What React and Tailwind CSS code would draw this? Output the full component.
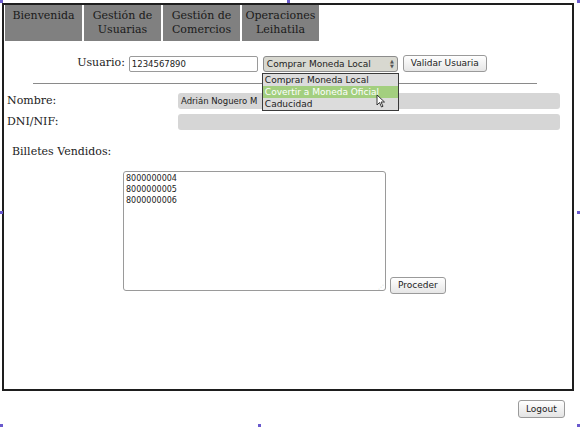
export default function App() {
  const serif = { fontFamily: '"DejaVu Serif", serif' };
  const tabs = [
    ["Bienvenida", ""],
    ["Gestión de", "Usuarias"],
    ["Gestión de", "Comercios"],
    ["Operaciones", "Leihatila"],
  ];

  return (
    <div className="relative w-[580px] h-[427px] bg-white overflow-hidden font-['DejaVu_Sans',sans-serif] text-[#222]">
      {/* Main frame */}
      <div className="absolute left-[2px] top-[3px] w-[572px] h-[388px] border-2 border-[#1e1e1e] bg-white">
        {/* Tabs */}
        <div className="flex gap-[2px] pl-[1px]" style={serif}>
          {tabs.map(([a, b]) => (
            <div
              key={a}
              className="w-[77px] h-[36px] bg-[#808080] text-[#1a1a1a] text-[11px] leading-[14px] flex flex-col items-center pt-[4px]"
            >
              <span>{a}</span>
              {b && <span>{b}</span>}
            </div>
          ))}
        </div>

        {/* Usuario row */}
        <div className="flex items-center justify-center mt-[14px] ml-[-12px] h-[17px]">
          <span className="text-[11px] mr-[4px]" style={serif}>Usuario:</span>
          <div className="w-[129px] h-[16px] border border-[#9a9a9a] rounded-[2px] text-[8.5px] leading-[14px] px-[2px] bg-white">
            1234567890
          </div>
          <div className="relative ml-[5px]">
            <div className="w-[135px] h-[16px] border border-[#8c8c8c] rounded-[3px] bg-[#d8d8d0] text-[9px] leading-[14px] pl-[3px] flex items-center justify-between pr-[3px]">
              <span>Comprar Moneda Local</span>
              <span className="text-[5px] leading-[5px] flex flex-col text-[#555]">
                <span>▲</span>
                <span>▼</span>
              </span>
            </div>
            {/* Open list */}
            <div className="absolute left-[-1px] top-[17px] w-[137px] border border-[#3a3a3a] bg-[#dcdcdc] text-[9px] leading-[12px] z-10">
              <div className="pl-[2px]">Comprar Moneda Local</div>
              <div className="pl-[2px] bg-[#a3cf7f] text-white">Covertir a Moneda Oficial</div>
              <div className="pl-[2px]">Caducidad</div>
              {/* cursor */}
              <svg className="absolute left-[113px] top-[20px]" width="11" height="14" viewBox="0 0 11 14">
                <path d="M1 1 L1 11 L3.5 8.5 L5.5 13 L7 12.3 L5 8 L8.5 8 Z" fill="#fff" stroke="#222" strokeWidth="0.9" />
              </svg>
            </div>
          </div>
          <div className="ml-[5px] h-[17px] px-[7px] border border-[#9a9a9a] rounded-[3px] bg-gradient-to-b from-white to-[#e6e6e6] text-[9px] leading-[15px]">
            Validar Usuaria
          </div>
        </div>

        {/* Separator */}
        <div className="mx-[29px] mt-[11px] h-[1px] bg-[#8a8a8a] w-[504px]" />

        {/* Nombre / DNI */}
        <div className="mt-[9px] flex items-center h-[16px]">
          <span className="w-[174px] pl-[3px] text-[11px]" style={serif}>Nombre:</span>
          <div className="w-[382px] h-[16px] rounded-[3px] bg-[#d6d6d6] text-[8.5px] leading-[16px] px-[3px]">
            Adrián Noguero M
          </div>
        </div>
        <div className="mt-[5px] flex items-center h-[16px]">
          <span className="w-[174px] pl-[3px] text-[11px]" style={serif}>DNI/NIF:</span>
          <div className="w-[382px] h-[16px] rounded-[3px] bg-[#d6d6d6]" />
        </div>

        {/* Billetes */}
        <div className="mt-[14px] pl-[8px] text-[11px]" style={serif}>Billetes Vendidos:</div>

        <div className="mt-[10px] ml-[119px] flex items-end">
          <div className="relative w-[263px] h-[120px] border border-[#9a9a9a] rounded-[3px] text-[8px] leading-[11px] px-[2px] pt-[1px]">
            <div>8000000004</div>
            <div>8000000005</div>
            <div>8000000006</div>
            <span className="absolute right-[1px] bottom-[0px] text-[6px] leading-[6px] text-[#bbb]">⋰</span>
          </div>
          <div className="ml-[4px] mb-[-3px] h-[17px] px-[7px] border border-[#9a9a9a] rounded-[3px] bg-gradient-to-b from-white to-[#e6e6e6] text-[9px] leading-[15px]">
            Proceder
          </div>
        </div>
      </div>

      {/* Logout */}
      <div className="absolute left-[518px] top-[400px] h-[18px] px-[7px] border border-[#9a9a9a] rounded-[3px] bg-gradient-to-b from-white to-[#e4e4e4] text-[9px] leading-[16px]">
        Logout
      </div>

      {/* Selection handles */}
      {[
        "left-0 top-0",
        "left-[287px] top-0",
        "left-[577px] top-0",
        "left-0 top-[211px]",
        "left-[577px] top-[211px]",
        "left-0 top-[424px]",
        "left-[258px] top-[424px]",
        "left-[577px] top-[424px]",
      ].map((c) => (
        <div key={c} className={`absolute w-[3px] h-[3px] bg-[#6a5acd] ${c}`} />
      ))}
    </div>
  );
}
